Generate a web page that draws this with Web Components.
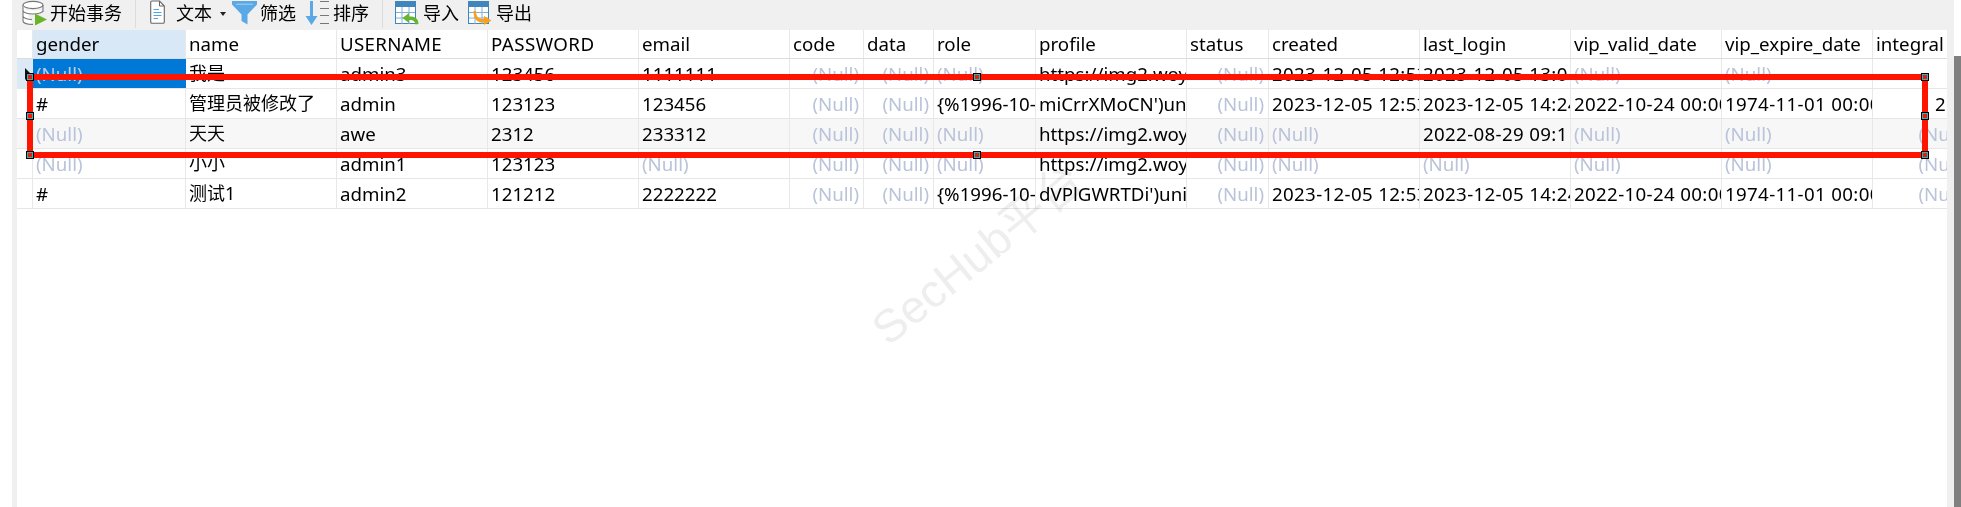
<!DOCTYPE html>
<html><head><meta charset="utf-8"><style>
html,body{margin:0;padding:0;background:#fff;overflow:hidden}
body{font:18px "Noto Sans","Noto Sans CJK SC",sans-serif;color:#000}
</style></head><body>
<app-shell>
<nav-toolbar slot="toolbar">
  <tool-btn label="开始事务" style="--gap:2px"><svg width="26" height="26" viewBox="0 0 26 26"><g fill="#fff" stroke="#777" stroke-width="1.1"><ellipse cx="11" cy="5" rx="10" ry="3.6"/><path d="M1 5v16c0 2 4.500 3.400 10 3.400M21 5v7M1 10.500c0 2 4.500 3.500 10 3.500s10-1.500 10-3.500M1 16c0 2 4.500 3.500 9 3.500"/></g><path d="M13 13.500L25 19.500 13 25.500z" fill="#6ab42d"/></svg></tool-btn>
  <tool-sep style="margin-right:14px"></tool-sep>
  <tool-btn label="文本" caret style="--gap:11px"><svg width="15" height="24" viewBox="0 0 15 24"><path d="M.7 2.500Q.7 1 2 1H9.500L14.300 6V22Q14.300 23.300 13 23.300H2Q.7 23.300.7 22z" fill="#fff" stroke="#666" stroke-width="1.1"/><path d="M9.500 1V6H14.300" fill="none" stroke="#666"/><path d="M3.500 9.500H9M3.500 12.500H11.500M3.500 15.500H11.500M3.500 18.500H8" stroke="#4ea5e8" stroke-width="1.200"/></svg></tool-btn>
  <tool-btn label="筛选" style="--gap:3px;margin-left:6px"><svg width="25" height="25" viewBox="0 0 25 25"><path d="M0 1H25V4.500L15.500 14.500V24.500L9.500 21V14.500L0 4.500z" fill="#5aa9e6"/><path d="M4 4.200H21" stroke="#fff" stroke-width=".8" opacity=".6"/></svg></tool-btn>
  <tool-btn label="排序" style="margin-left:9px"><svg width="24" height="25" viewBox="0 0 24 25"><path d="M5 1H8V16H12.500L6.500 25 .500 16H5z" fill="#5aa9e6"/><path d="M15 1.500H24M15 8.500H24M15 15.500H24M15 23.500H24" stroke="#777" stroke-width="1.200"/></svg></tool-btn>
  <tool-sep></tool-sep>
  <tool-btn label="导入"><svg width="24" height="25" viewBox="0 0 24 25"><rect x=".5" y="1.500" width="20" height="22" fill="#fff" stroke="#3f86bd"/><rect y="1" width="21" height="6" fill="#3f86bd"/><path d="M7 7V24M14 7V24M1 12.500H20M1 18H20" stroke="#7fb0d6"/><path d="M23.500 24C23.500 18 19 16 14 16.500V13L7.500 18 14 23V20C18 19.500 20 21 20.500 24.500z" fill="#67b52e"/></svg></tool-btn>
  <tool-btn label="导出" style="margin-left:9px"><svg width="24" height="25" viewBox="0 0 24 25"><rect x=".5" y="1.500" width="20" height="22" fill="#fff" stroke="#3f86bd"/><rect y="1" width="21" height="6" fill="#3f86bd"/><path d="M7 7V24M14 7V24M1 12.500H20M1 18H20" stroke="#7fb0d6"/><path d="M8 11C8 17 11 19.500 16 19V16L23.500 20.500 16 25V22.500C10 23 5.500 20 5.500 11z" fill="#f7a11d"/></svg></tool-btn>
</nav-toolbar>
<data-grid slot="grid">
  <grid-row head>
    <grid-cell gutter></grid-cell><grid-cell active>gender</grid-cell><grid-cell>name</grid-cell><grid-cell style="letter-spacing:.3px">USERNAME</grid-cell><grid-cell style="letter-spacing:.45px">PASSWORD</grid-cell><grid-cell>email</grid-cell><grid-cell>code</grid-cell><grid-cell>data</grid-cell><grid-cell>role</grid-cell><grid-cell>profile</grid-cell><grid-cell>status</grid-cell><grid-cell>created</grid-cell><grid-cell>last_login</grid-cell><grid-cell>vip_valid_date</grid-cell><grid-cell>vip_expire_date</grid-cell><grid-cell>integral</grid-cell>
  </grid-row>
  <grid-row>
    <grid-cell gutter current></grid-cell><grid-cell selected nul>(Null)</grid-cell><grid-cell cjk>我是</grid-cell><grid-cell>admin3</grid-cell><grid-cell>123456</grid-cell><grid-cell>1111111</grid-cell><grid-cell nul end>(Null)</grid-cell><grid-cell nul end>(Null)</grid-cell><grid-cell nul>(Null)</grid-cell><grid-cell>https://img2.woy</grid-cell><grid-cell nul end>(Null)</grid-cell><grid-cell date>2023-12-05 12:53</grid-cell><grid-cell date>2023-12-05 13:0</grid-cell><grid-cell nul>(Null)</grid-cell><grid-cell nul>(Null)</grid-cell><grid-cell></grid-cell>
  </grid-row>
  <grid-row>
    <grid-cell gutter></grid-cell><grid-cell>#</grid-cell><grid-cell cjk>管理员被修改了</grid-cell><grid-cell>admin</grid-cell><grid-cell>123123</grid-cell><grid-cell>123456</grid-cell><grid-cell nul end>(Null)</grid-cell><grid-cell nul end>(Null)</grid-cell><grid-cell>{%1996-10-</grid-cell><grid-cell>miCrrXMoCN')un</grid-cell><grid-cell nul end>(Null)</grid-cell><grid-cell date>2023-12-05 12:53</grid-cell><grid-cell date>2023-12-05 14:24</grid-cell><grid-cell date>2022-10-24 00:00</grid-cell><grid-cell date>1974-11-01 00:00</grid-cell><grid-cell style="padding-left:62px">2</grid-cell>
  </grid-row>
  <grid-row alt>
    <grid-cell gutter></grid-cell><grid-cell nul>(Null)</grid-cell><grid-cell cjk>天天</grid-cell><grid-cell>awe</grid-cell><grid-cell>2312</grid-cell><grid-cell>233312</grid-cell><grid-cell nul end>(Null)</grid-cell><grid-cell nul end>(Null)</grid-cell><grid-cell nul>(Null)</grid-cell><grid-cell>https://img2.woy</grid-cell><grid-cell nul end>(Null)</grid-cell><grid-cell nul>(Null)</grid-cell><grid-cell date>2022-08-29 09:1</grid-cell><grid-cell nul>(Null)</grid-cell><grid-cell nul>(Null)</grid-cell><grid-cell nul end style="padding-right:6px">(Null)</grid-cell>
  </grid-row>
  <grid-row>
    <grid-cell gutter></grid-cell><grid-cell nul>(Null)</grid-cell><grid-cell cjk>小小</grid-cell><grid-cell>admin1</grid-cell><grid-cell>123123</grid-cell><grid-cell nul>(Null)</grid-cell><grid-cell nul end>(Null)</grid-cell><grid-cell nul end>(Null)</grid-cell><grid-cell nul>(Null)</grid-cell><grid-cell>https://img2.woy</grid-cell><grid-cell nul end>(Null)</grid-cell><grid-cell nul>(Null)</grid-cell><grid-cell nul>(Null)</grid-cell><grid-cell nul>(Null)</grid-cell><grid-cell nul>(Null)</grid-cell><grid-cell nul end style="padding-right:6px">(Null)</grid-cell>
  </grid-row>
  <grid-row>
    <grid-cell gutter></grid-cell><grid-cell>#</grid-cell><grid-cell cjk>测试1</grid-cell><grid-cell>admin2</grid-cell><grid-cell>121212</grid-cell><grid-cell>2222222</grid-cell><grid-cell nul end>(Null)</grid-cell><grid-cell nul end>(Null)</grid-cell><grid-cell>{%1996-10-</grid-cell><grid-cell>dVPlGWRTDi')uni</grid-cell><grid-cell nul end>(Null)</grid-cell><grid-cell date>2023-12-05 12:53</grid-cell><grid-cell date>2023-12-05 14:24</grid-cell><grid-cell date>2022-10-24 00:00</grid-cell><grid-cell date>1974-11-01 00:00</grid-cell><grid-cell nul end style="padding-right:6px">(Null)</grid-cell>
  </grid-row>
</data-grid>
<water-mark slot="overlay">SecHub平台</water-mark>
<red-box slot="overlay"></red-box>
</app-shell>
<script>
function def(name, css, html, extra){
  customElements.define(name, class extends HTMLElement{
    constructor(){super();this.attachShadow({mode:'open'}).innerHTML='<style>'+css+'</style>'+html;}
    connectedCallback(){extra&&extra.call(this);}
  });
}
def('app-shell',
 `:host{display:flex;height:507px;position:relative;overflow:hidden;background:#fff}
  .main{flex:1;margin-left:12px;background:#f0f0f0;display:flex;flex-direction:column;min-width:0}
  .body{flex:1;margin:0 7px 0 5px;background:#fff;min-height:0;overflow:hidden}
  .bar{width:7px;margin-top:56px;background:#808080}`,
 `<div class="main"><slot name="toolbar"></slot><div class="body"><slot name="grid"></slot></div></div><div class="bar"></div><slot name="overlay"></slot>`);
def('nav-toolbar',
 `:host{display:flex;align-items:flex-start;height:30px;padding-left:10px;box-sizing:border-box;overflow:hidden}`,
 `<slot></slot>`);
def('tool-sep',
 `:host{display:block;width:1px;height:28px;background:#dcdcdc;margin:0 12px 0 13px}`,``);
def('tool-btn',
 `:host{display:flex;align-items:flex-start;gap:var(--gap,4px);height:30px;font-size:18px;line-height:27px;white-space:nowrap}
  ::slotted(svg){display:block;flex:none}
  .c{display:none;width:0;height:0;border:3px solid transparent;border-top:4px solid #222;border-bottom:0;margin:12px 0 0 -3px}
  :host([caret]) .c{display:block}`,
 `<slot></slot><span class="t"></span><i class="c"></i>`,
 function(){this.shadowRoot.querySelector('.t').textContent=this.getAttribute('label');});
def('data-grid',
 `:host{display:block;width:1955px;--cols:16px 153px 151px 151px 151px 151px 74px 70px 102px 151px 82px 151px 151px 151px 151px 99px}`,
 `<slot></slot>`);
def('grid-row',
 `:host{display:grid;grid-template-columns:var(--cols);height:30px;box-sizing:border-box;border-bottom:1px solid #e6e6e6;--lh:29px}
  :host([head]){height:29px;border-bottom-color:#dcdcdc;--lh:27px}
  :host([alt]){background:#f7f7f7}`,
 `<slot></slot>`);
def('grid-cell',
 `:host{display:block;min-width:0;overflow:hidden;white-space:nowrap;padding:0 0 0 3px;border-right:1px solid #e8e8e8;line-height:var(--lh);font-size:18.7px;color:#000;box-sizing:border-box}
  :host([cjk]){font-size:18px}
  :host([date]){letter-spacing:.35px}
  :host([nul]){color:#b9c3d9}
  :host([end]){text-align:right;padding:0 4px 0 0}
  :host([gutter]){padding:0;position:relative}
  :host([active]){background:#d8e8f7}
  :host([selected]){background:#0078d7;color:#b9cdea;border-right:0}
  :host([current]){background:#dbe9f7}
  :host([current])::after{content:"";position:absolute;left:8px;top:9px;border-left:6px solid #111;border-top:6px solid transparent;border-bottom:6px solid transparent}`,
 `<slot></slot>`);
def('water-mark',
 `:host{position:absolute;left:894px;top:304px;font:46px "Liberation Sans","Noto Sans CJK SC",sans-serif;color:#eeeeee;mix-blend-mode:multiply;transform:rotate(-39deg);transform-origin:left bottom;white-space:nowrap;line-height:50px;pointer-events:none}`,
 `<slot></slot>`);
def('red-box',
 `:host{position:absolute;left:27px;top:74px;width:1901px;height:84px;box-sizing:border-box;border:6px solid #fe1400}
  i{position:absolute;width:8px;height:8px;box-sizing:border-box;border:1px solid #000;outline:1px solid #22b8c4;outline-offset:-2px;margin:-4px 0 0 -4px;background:#fe1400}
  `,
 `<i style="left:-3px;top:-3px"></i><i style="left:944px;top:-3px"></i><i style="left:1892px;top:-3px"></i>
  <i style="left:-3px;top:36px"></i><i style="left:1892px;top:36px"></i>
  <i style="left:-3px;top:75px"></i><i style="left:944px;top:75px"></i><i style="left:1892px;top:75px"></i>`);
</script>
</body></html>
